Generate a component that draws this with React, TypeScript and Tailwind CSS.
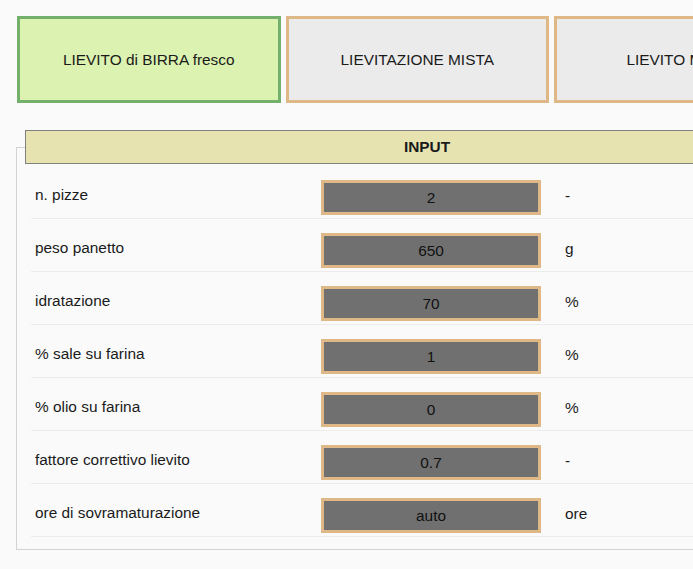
import React from "react";

const rows: { label: string; value: string; unit: string }[] = [
  { label: "n. pizze", value: "2", unit: "-" },
  { label: "peso panetto", value: "650", unit: "g" },
  { label: "idratazione", value: "70", unit: "%" },
  { label: "% sale su farina", value: "1", unit: "%" },
  { label: "% olio su farina", value: "0", unit: "%" },
  { label: "fattore correttivo lievito", value: "0.7", unit: "-" },
  { label: "ore di sovramaturazione", value: "auto", unit: "ore" },
];

export default function App() {
  return (
    <div
      className="w-[693px] h-[569px] overflow-hidden bg-[#fafafa] text-[#1a1a1a] text-[15.4px]"
      style={{ fontFamily: '"Liberation Sans", Arial, sans-serif' }}
    >
      <div className="flex gap-[5px] pt-[16px] pl-[17px] w-[1200px]">
        <div className="w-[263.5px] h-[87px] shrink-0 border-[3px] border-[#73b06b] bg-[#dcf2b0] flex items-center justify-center">
          LIEVITO di BIRRA fresco
        </div>
        <div className="w-[263.5px] h-[87px] shrink-0 border-[3px] border-[#deb887] bg-[#ebebeb] flex items-center justify-center">
          LIEVITAZIONE MISTA
        </div>
        <div className="w-[263.5px] h-[87px] shrink-0 border-[3px] border-[#deb887] bg-[#ebebeb] flex items-center justify-center">
          LIEVITO MADRE
        </div>
      </div>

      <div className="mt-[44px] ml-[16px] w-[822px] border border-[#d3d3d3] pb-[12px]">
        <div className="-mt-[18px] ml-[8px] w-[804px] h-[34px] border border-[#808080] bg-[#e6e3b1] flex items-center justify-center font-bold">
          INPUT
        </div>
        <div className="mx-[14px] pt-[2px]">
          {rows.map((r) => (
            <div
              key={r.label}
              className="h-[53px] border-b border-[#ececec] flex items-end pb-[3px]"
            >
              <div className="flex items-center h-[35px] w-full">
                <div className="w-[290px] pl-[4px] pb-[5px]">{r.label}</div>
                <div className="w-[220px] h-[35px] border-[3px] border-[#deb887] bg-[#707070] flex items-center justify-center text-[#111]">
                  {r.value}
                </div>
                <div className="ml-[24px] pb-[3px]">{r.unit}</div>
              </div>
            </div>
          ))}
        </div>
      </div>
    </div>
  );
}
